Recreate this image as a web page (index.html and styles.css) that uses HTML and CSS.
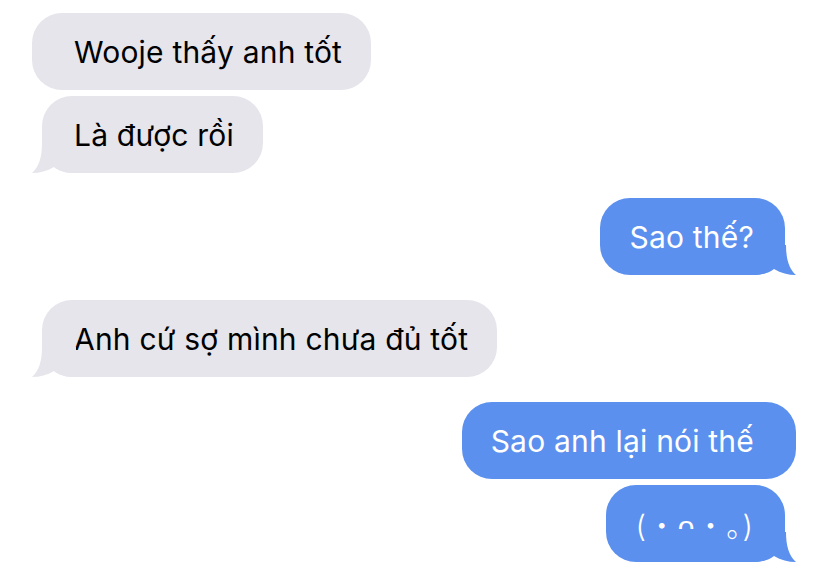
FILE: index.html
```html
<!DOCTYPE html>
<html>
	<head>
		<meta charset="UTF-8" />
		<title>Tin nhắn</title>
		<link rel="stylesheet" href="styles.css">
	</head>
	<body>
		<div class="thread">
			<div class="row in">
				<div class="bubble">Wooje thấy anh tốt</div>
			</div>
			<div class="row in tight">
				<div class="bubble tail">Là được rồi
					<svg class="tail-shape" viewBox="0 0 44 30"><path d="M10 0 C10 14 7 24 0 30 C8 30 15 28 22 24 C27 28 34 30 44 30 L44 0 Z"/></svg>
				</div>
			</div>
			<div class="row out">
				<div class="bubble tail">Sao thế?
					<svg class="tail-shape" viewBox="0 0 44 30"><path d="M10 0 C10 14 7 24 0 30 C8 30 15 28 22 24 C27 28 34 30 44 30 L44 0 Z"/></svg>
				</div>
			</div>
			<div class="row in">
				<div class="bubble tail">Anh cứ sợ mình chưa đủ tốt
					<svg class="tail-shape" viewBox="0 0 44 30"><path d="M10 0 C10 14 7 24 0 30 C8 30 15 28 22 24 C27 28 34 30 44 30 L44 0 Z"/></svg>
				</div>
			</div>
			<div class="row out">
				<div class="bubble">Sao anh lại nói thế</div>
			</div>
			<div class="row out tight">
				<div class="bubble tail"><span class="kao">(・ᴖ・｡)</span>
					<svg class="tail-shape" viewBox="0 0 44 30"><path d="M10 0 C10 14 7 24 0 30 C8 30 15 28 22 24 C27 28 34 30 44 30 L44 0 Z"/></svg>
				</div>
			</div>
		</div>
	</body>
</html>
```

FILE: styles.css
```css
* {
	margin: 0;
	padding: 0;
	box-sizing: border-box;
}

body {
	background: #fff;
	font-family: Inter, "Noto Sans", "Noto Sans CJK JP", sans-serif;
	font-size: 30px;
	letter-spacing: 0.2px;
}

.thread {
	display: flex;
	flex-direction: column;
	gap: 25px;
	padding: 13px 32px 0;
}

.row {
	display: flex;
}

.row.tight {
	margin-top: -19px;
}

.row.out {
	justify-content: flex-end;
}

.bubble {
	position: relative;
	display: flex;
	align-items: center;
	height: 77px;
	border-radius: 30px;
	white-space: nowrap;
}

/* 收到的 */
.in .bubble {
	background: #e6e5eb;
	color: #000;
	padding: 0 29px 0 42px;
}

/* 发出的 */
.out .bubble {
	background: #5b90ef;
	color: #fff;
	padding: 0 42px 0 29px;
}

.in .bubble.tail {
	margin-left: 10px;
	padding-left: 32px;
}

.out .bubble.tail {
	margin-right: 11px;
	padding-right: 31px;
}

.tail-shape {
	position: absolute;
	bottom: 0;
	width: 44px;
	height: 30px;
}

.in .tail-shape {
	left: -10px;
	fill: #e6e5eb;
}

.out .tail-shape {
	right: -11px;
	fill: #5b90ef;
	transform: scaleX(-1);
}

.kao {
	font-family: Inter, "Noto Sans CJK JP", sans-serif;
	font-weight: 300;
	letter-spacing: 1px;
}
```
